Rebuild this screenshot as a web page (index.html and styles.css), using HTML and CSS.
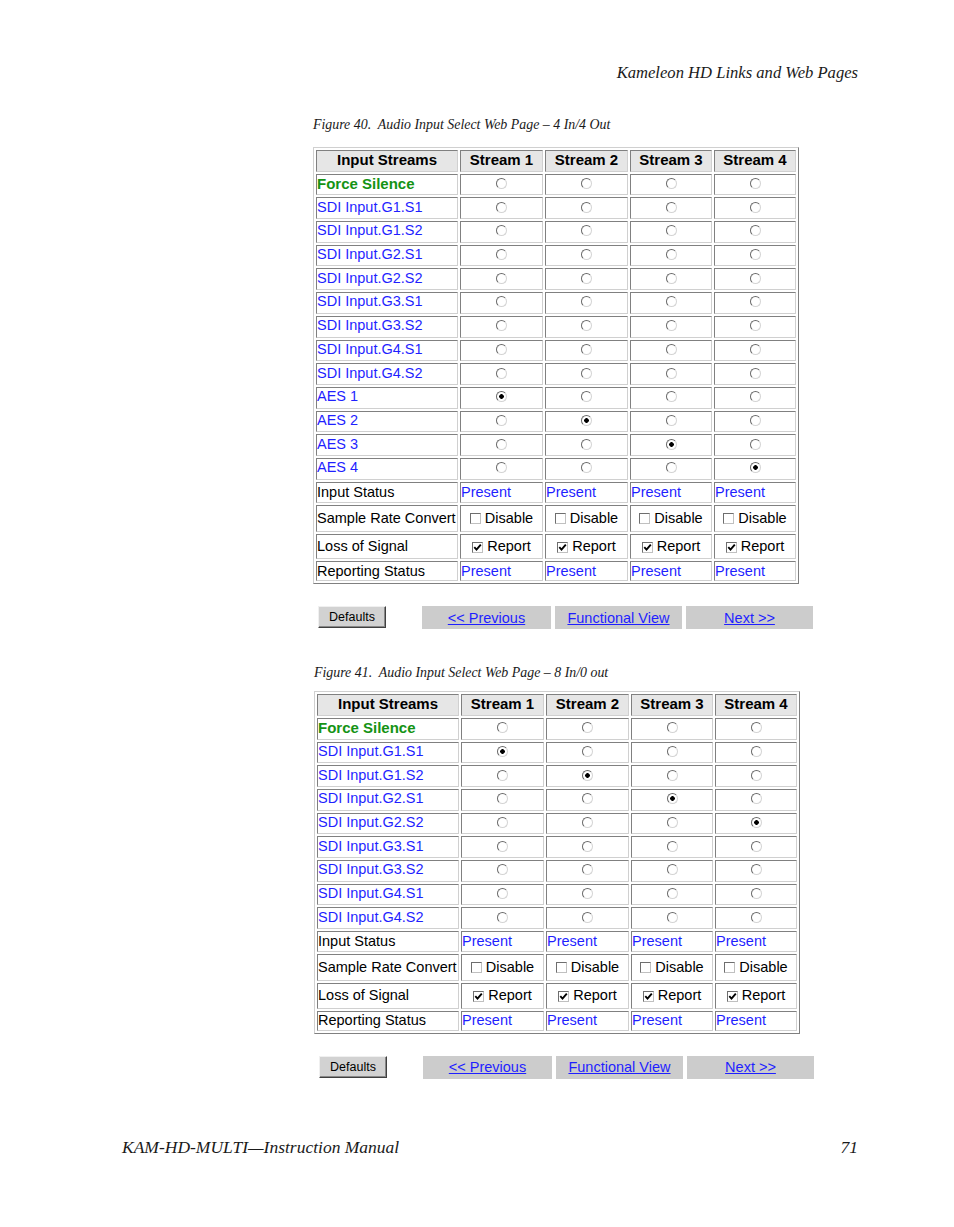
FILE: index.html
```html
<!DOCTYPE html>
<html>
<head>
<meta charset="utf-8">
<link rel="stylesheet" href="styles.css">
</head>
<body>
<div class="page">
  <header class="running-head">Kameleon HD Links and Web Pages</header>

  <section class="figure fig1">
    <p class="caption">Figure 40.&nbsp; Audio Input Select Web Page – 4 In/4 Out</p>
    <table class="grid">
      <tr class="r"><th class="c1">Input Streams</th><th class="cs">Stream 1</th><th class="cs">Stream 2</th><th class="cs3">Stream 3</th><th class="cs4">Stream 4</th></tr>
      <tr class="r"><td class="green">Force Silence</td><td class="c"><span class="radio"></span></td><td class="c"><span class="radio"></span></td><td class="c"><span class="radio"></span></td><td class="c"><span class="radio"></span></td></tr>
      <tr class="r"><td class="blue">SDI Input.G1.S1</td><td class="c"><span class="radio"></span></td><td class="c"><span class="radio"></span></td><td class="c"><span class="radio"></span></td><td class="c"><span class="radio"></span></td></tr>
      <tr class="r"><td class="blue">SDI Input.G1.S2</td><td class="c"><span class="radio"></span></td><td class="c"><span class="radio"></span></td><td class="c"><span class="radio"></span></td><td class="c"><span class="radio"></span></td></tr>
      <tr class="r"><td class="blue">SDI Input.G2.S1</td><td class="c"><span class="radio"></span></td><td class="c"><span class="radio"></span></td><td class="c"><span class="radio"></span></td><td class="c"><span class="radio"></span></td></tr>
      <tr class="r"><td class="blue">SDI Input.G2.S2</td><td class="c"><span class="radio"></span></td><td class="c"><span class="radio"></span></td><td class="c"><span class="radio"></span></td><td class="c"><span class="radio"></span></td></tr>
      <tr class="r"><td class="blue">SDI Input.G3.S1</td><td class="c"><span class="radio"></span></td><td class="c"><span class="radio"></span></td><td class="c"><span class="radio"></span></td><td class="c"><span class="radio"></span></td></tr>
      <tr class="r"><td class="blue">SDI Input.G3.S2</td><td class="c"><span class="radio"></span></td><td class="c"><span class="radio"></span></td><td class="c"><span class="radio"></span></td><td class="c"><span class="radio"></span></td></tr>
      <tr class="r"><td class="blue">SDI Input.G4.S1</td><td class="c"><span class="radio"></span></td><td class="c"><span class="radio"></span></td><td class="c"><span class="radio"></span></td><td class="c"><span class="radio"></span></td></tr>
      <tr class="r"><td class="blue">SDI Input.G4.S2</td><td class="c"><span class="radio"></span></td><td class="c"><span class="radio"></span></td><td class="c"><span class="radio"></span></td><td class="c"><span class="radio"></span></td></tr>
      <tr class="r"><td class="blue">AES 1</td><td class="c"><span class="radio on"></span></td><td class="c"><span class="radio"></span></td><td class="c"><span class="radio"></span></td><td class="c"><span class="radio"></span></td></tr>
      <tr class="r"><td class="blue">AES 2</td><td class="c"><span class="radio"></span></td><td class="c"><span class="radio on"></span></td><td class="c"><span class="radio"></span></td><td class="c"><span class="radio"></span></td></tr>
      <tr class="r"><td class="blue">AES 3</td><td class="c"><span class="radio"></span></td><td class="c"><span class="radio"></span></td><td class="c"><span class="radio on"></span></td><td class="c"><span class="radio"></span></td></tr>
      <tr class="r"><td class="blue">AES 4</td><td class="c"><span class="radio"></span></td><td class="c"><span class="radio"></span></td><td class="c"><span class="radio"></span></td><td class="c"><span class="radio on"></span></td></tr>
      <tr class="r-status"><td>Input Status</td><td class="blue">Present</td><td class="blue">Present</td><td class="blue">Present</td><td class="blue">Present</td></tr>
      <tr class="r-src"><td>Sample Rate Convert</td><td class="c"><span class="cb"></span>Disable</td><td class="c"><span class="cb"></span>Disable</td><td class="c"><span class="cb"></span>Disable</td><td class="c"><span class="cb"></span>Disable</td></tr>
      <tr class="r-los"><td>Loss of Signal</td><td class="c"><span class="cb"><svg viewBox="0 0 9 9" class="tick"><path d="M1.3 4.2 L3.5 6.6 L7.8 1.6"/></svg></span>Report</td><td class="c"><span class="cb"><svg viewBox="0 0 9 9" class="tick"><path d="M1.3 4.2 L3.5 6.6 L7.8 1.6"/></svg></span>Report</td><td class="c"><span class="cb"><svg viewBox="0 0 9 9" class="tick"><path d="M1.3 4.2 L3.5 6.6 L7.8 1.6"/></svg></span>Report</td><td class="c"><span class="cb"><svg viewBox="0 0 9 9" class="tick"><path d="M1.3 4.2 L3.5 6.6 L7.8 1.6"/></svg></span>Report</td></tr>
      <tr class="r-rep"><td>Reporting Status</td><td class="blue">Present</td><td class="blue">Present</td><td class="blue">Present</td><td class="blue">Present</td></tr>
    </table>
    <div class="controls">
      <button class="btn">Defaults</button>
      <div class="nav">
        <a class="nav-cell w1">&lt;&lt; Previous</a>
        <a class="nav-cell">Functional View</a>
        <a class="nav-cell">Next &gt;&gt;</a>
      </div>
    </div>
  </section>

  <section class="figure fig2">
    <p class="caption">Figure 41.&nbsp; Audio Input Select Web Page – 8 In/0 out</p>
    <table class="grid">
      <tr class="r"><th class="c1">Input Streams</th><th class="cs">Stream 1</th><th class="cs">Stream 2</th><th class="cs3">Stream 3</th><th class="cs4">Stream 4</th></tr>
      <tr class="r"><td class="green">Force Silence</td><td class="c"><span class="radio"></span></td><td class="c"><span class="radio"></span></td><td class="c"><span class="radio"></span></td><td class="c"><span class="radio"></span></td></tr>
      <tr class="r"><td class="blue">SDI Input.G1.S1</td><td class="c"><span class="radio on"></span></td><td class="c"><span class="radio"></span></td><td class="c"><span class="radio"></span></td><td class="c"><span class="radio"></span></td></tr>
      <tr class="r"><td class="blue">SDI Input.G1.S2</td><td class="c"><span class="radio"></span></td><td class="c"><span class="radio on"></span></td><td class="c"><span class="radio"></span></td><td class="c"><span class="radio"></span></td></tr>
      <tr class="r"><td class="blue">SDI Input.G2.S1</td><td class="c"><span class="radio"></span></td><td class="c"><span class="radio"></span></td><td class="c"><span class="radio on"></span></td><td class="c"><span class="radio"></span></td></tr>
      <tr class="r"><td class="blue">SDI Input.G2.S2</td><td class="c"><span class="radio"></span></td><td class="c"><span class="radio"></span></td><td class="c"><span class="radio"></span></td><td class="c"><span class="radio on"></span></td></tr>
      <tr class="r"><td class="blue">SDI Input.G3.S1</td><td class="c"><span class="radio"></span></td><td class="c"><span class="radio"></span></td><td class="c"><span class="radio"></span></td><td class="c"><span class="radio"></span></td></tr>
      <tr class="r"><td class="blue">SDI Input.G3.S2</td><td class="c"><span class="radio"></span></td><td class="c"><span class="radio"></span></td><td class="c"><span class="radio"></span></td><td class="c"><span class="radio"></span></td></tr>
      <tr class="r"><td class="blue">SDI Input.G4.S1</td><td class="c"><span class="radio"></span></td><td class="c"><span class="radio"></span></td><td class="c"><span class="radio"></span></td><td class="c"><span class="radio"></span></td></tr>
      <tr class="r"><td class="blue">SDI Input.G4.S2</td><td class="c"><span class="radio"></span></td><td class="c"><span class="radio"></span></td><td class="c"><span class="radio"></span></td><td class="c"><span class="radio"></span></td></tr>
      <tr class="r-status"><td>Input Status</td><td class="blue">Present</td><td class="blue">Present</td><td class="blue">Present</td><td class="blue">Present</td></tr>
      <tr class="r-src"><td>Sample Rate Convert</td><td class="c"><span class="cb"></span>Disable</td><td class="c"><span class="cb"></span>Disable</td><td class="c"><span class="cb"></span>Disable</td><td class="c"><span class="cb"></span>Disable</td></tr>
      <tr class="r-los"><td>Loss of Signal</td><td class="c"><span class="cb"><svg viewBox="0 0 9 9" class="tick"><path d="M1.3 4.2 L3.5 6.6 L7.8 1.6"/></svg></span>Report</td><td class="c"><span class="cb"><svg viewBox="0 0 9 9" class="tick"><path d="M1.3 4.2 L3.5 6.6 L7.8 1.6"/></svg></span>Report</td><td class="c"><span class="cb"><svg viewBox="0 0 9 9" class="tick"><path d="M1.3 4.2 L3.5 6.6 L7.8 1.6"/></svg></span>Report</td><td class="c"><span class="cb"><svg viewBox="0 0 9 9" class="tick"><path d="M1.3 4.2 L3.5 6.6 L7.8 1.6"/></svg></span>Report</td></tr>
      <tr class="r-rep"><td>Reporting Status</td><td class="blue">Present</td><td class="blue">Present</td><td class="blue">Present</td><td class="blue">Present</td></tr>
    </table>
    <div class="controls">
      <button class="btn">Defaults</button>
      <div class="nav">
        <a class="nav-cell w1">&lt;&lt; Previous</a>
        <a class="nav-cell">Functional View</a>
        <a class="nav-cell">Next &gt;&gt;</a>
      </div>
    </div>
  </section>

  <footer class="running-foot">
    <span>KAM-HD-MULTI—Instruction Manual</span>
    <span>71</span>
  </footer>
</div>
</body>
</html>
```

FILE: styles.css
```css
body {
  margin: 0;
  background: #ffffff;
}

.page {
  width: 954px;
  height: 1227px;
  box-sizing: border-box;
  padding-top: 62px;
  display: flex;
  flex-direction: column;
}

.running-head {
  font-family: "Liberation Serif", serif;
  font-style: italic;
  font-size: 16.6px;
  line-height: 22px;
  color: #1a1a1a;
  text-align: right;
  padding-right: 96px;
}

.figure {
  margin-left: 313px;
  width: 520px;
}

.fig1 { margin-top: 33px; }
.fig2 { margin-top: 36px; margin-left: 314px; }

.caption {
  margin: 0;
  font-family: "Liberation Serif", serif;
  font-style: italic;
  font-size: 13.9px;
  line-height: 16px;
  color: #1a1a1a;
}

.fig1 .caption { margin-bottom: 14px; }
.fig2 .caption { margin-bottom: 10px; }

.grid {
  width: 486px;
  table-layout: fixed;
  border-collapse: separate;
  border-spacing: 2px;
  border: 1px solid;
  border-color: #d0d0d0 #808080 #808080 #d0d0d0;
  font-family: "Liberation Sans", Arial, sans-serif;
  font-size: 14.5px;
  line-height: 17px;
  color: #000;
}

.grid th,
.grid td {
  box-sizing: border-box;
  border: 1px solid;
  border-color: #808080 #d0d0d0 #d0d0d0 #808080;
  padding: 0;
  white-space: nowrap;
  vertical-align: middle;
  overflow: hidden;
}

.grid th {
  background: #e6e6e6;
  font-weight: bold;
  font-size: 15px;
  text-align: center;
  padding-bottom: 2px;
}

.c1 { width: 142px; }
.cs { width: 83px; }
.cs3, .cs4 { width: 82px; }

.r th, .r td { height: 21.7px; }
.r-status td { height: 21px; }
.r-src td { height: 27px; }
.r-los td { height: 25.5px; }
.r-rep td { height: 20px; }

.r td { padding-bottom: 2px; }

.green {
  color: #149314;
  font-weight: bold;
  font-size: 15px;
}

.blue { color: #1f1fff; }

.c { text-align: center; }

.radio {
  display: inline-block;
  width: 11px;
  height: 11px;
  box-sizing: border-box;
  border-radius: 50%;
  border: 1px solid;
  border-color: #6a6a6a #d4d4d4 #d4d4d4 #6a6a6a;
  background: #ffffff;
  vertical-align: -1px;
}

.radio.on {
  background: radial-gradient(circle, #000 0 2px, #ffffff 2.6px);
}

.cb {
  display: inline-flex;
  align-items: center;
  justify-content: center;
  width: 11px;
  height: 11px;
  box-sizing: border-box;
  border: 1px solid;
  border-color: #6e6e6e #c0c0c0 #c0c0c0 #6e6e6e;
  background: #ffffff;
  margin-right: 4px;
  vertical-align: -1px;
}

.tick {
  width: 9px;
  height: 9px;
  display: block;
}

.tick path {
  fill: none;
  stroke: #000;
  stroke-width: 1.9;
}

.controls {
  display: flex;
  align-items: flex-start;
  margin-top: 22px;
}

.btn {
  margin: 0 0 0 5px;
  width: 68px;
  height: 22px;
  padding: 0;
  box-sizing: border-box;
  font-family: "Liberation Sans", Arial, sans-serif;
  font-size: 12.5px;
  color: #000;
  background: #d2d2d2;
  border: 1px solid;
  border-color: #f0f0f0 #404040 #404040 #f0f0f0;
  box-shadow: inset -1px -1px 0 #888888;
}

.nav {
  display: flex;
  gap: 4px;
  margin-left: 36px;
}

.nav-cell {
  width: 127px;
  height: 23px;
  background: #cccccc;
  display: flex;
  align-items: center;
  justify-content: center;
  font-family: "Liberation Sans", Arial, sans-serif;
  font-size: 14.5px;
  color: #1f1fff;
  text-decoration: underline;
}

.nav-cell.w1 { width: 129px; }

.running-foot {
  margin-top: auto;
  margin-bottom: 69px;
  display: flex;
  justify-content: space-between;
  padding: 0 96px 0 122px;
  font-family: "Liberation Serif", serif;
  font-style: italic;
  font-size: 17.5px;
  line-height: 22px;
  color: #1a1a1a;
}
```
